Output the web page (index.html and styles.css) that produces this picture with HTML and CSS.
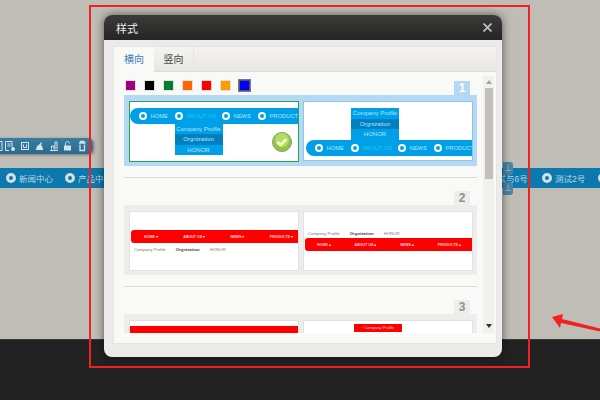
FILE: index.html
```html
<!DOCTYPE html>
<html>
<head>
  <meta charset="utf-8">
  <title>样式</title>
  <link rel="stylesheet" href="styles.css">
</head>
<body>
  <div class="page">
    <div class="top"></div>
    <div class="site-nav">
      <span class="site-item"><i class="dot"></i>新闻中心</span>
      <span class="site-item"><i class="dot"></i>产品中心</span>
      <span class="site-item far"><i class="dot"></i>测试与6号</span>
      <span class="site-item short"><i class="dot"></i>测试2号</span>
      <span class="site-item last"><i class="dot"></i></span>
    </div>
    <div class="middle"></div>
    <div class="footer"></div>
  </div>

  <!-- toolbar of the page behind -->
  <div class="toolbar">
    <svg width="90" height="12" viewBox="0 0 90 12" fill="none" stroke="#d5e3ea">
      <path d="M-3 1.500h5v9h-5"/>
      <path d="M12 7V1.500H5.500v9H9M7.500 4h3M7.500 6h3"/>
      <circle cx="13" cy="9" r="2" fill="#d5e3ea" stroke="none"/>
      <rect x="21.500" y="2.500" width="7" height="7"/>
      <path d="M23.500 4.500v3h3v-3"/>
      <path d="M36 10c0-3 1.500-5 4-6l1-2 1 1-1 2c1 1 2 2.500 2 5z" fill="#d5e3ea" stroke="none"/>
      <path d="M50 10.500h8M51.500 9.500V6h2.500v3.500M55 9.500V2h2v7.500"/>
      <rect x="64" y="5.500" width="7" height="5" fill="#d5e3ea" stroke="none"/>
      <path d="M65.500 5.500V3.500c0-2.500 4-2.500 4 0"/>
      <path d="M79 3h6.500M80.500 3V1.500h3.500V3M80 4.500v6h4.500v-6" stroke-width="1.300"/>
    </svg>
  </div>
  <div class="side-tab first">⊥</div>
  <div class="side-tab second">⊥</div>

  <div class="modal">
    <div class="modal-head">
      <span class="modal-title">样式</span>
      <svg class="modal-close" width="9" height="9" viewBox="0 0 9 9" stroke="#bdbdbd" stroke-width="1.800"><path d="M.5.500l8 8M8.500.500l-8 8"/></svg>
    </div>
    <div class="panel">
      <div class="tabs">
        <span class="tab active">横向</span>
        <span class="tab">竖向</span>
      </div>
      <div class="content">
        <div class="list">
          <div class="swatches">
            <i class="swatch purple"></i>
            <i class="swatch black"></i>
            <i class="swatch green"></i>
            <i class="swatch orange"></i>
            <i class="swatch red"></i>
            <i class="swatch amber"></i>
            <i class="swatch blue selected"></i>
          </div>

          <div class="num num-blue">1</div>
          <div class="group group-blue">
            <div class="card card-picked">
              <div class="menu menu-first">
                <span class="m-item w36"><i class="dot small"></i>HOME</span>
                <span class="m-item w47 lit"><i class="dot small"></i>ABOUT US</span>
                <span class="m-item w36"><i class="dot small"></i>NEWS</span>
                <span class="m-item"><i class="dot small"></i>PRODUCT</span>
              </div>
              <div class="drop drop-left">
                <span>Company Profile</span>
                <span class="dark">Orgnization</span>
                <span>HONOR</span>
              </div>
              <svg class="check" width="20" height="20" viewBox="0 0 20 20">
                <circle cx="10" cy="10" r="9.500" fill="#8fc63f" stroke="#8a9a78"/>
                <circle cx="10" cy="8" r="7" fill="#b4dc62"/>
                <path d="M5.500 10l3 3 6-6" fill="none" stroke="#f4f8d8" stroke-width="2.500"/>
              </svg>
            </div>
            <div class="card card-blue">
              <div class="drop drop-up">
                <span>Company Profile</span>
                <span class="dark">Orgnization</span>
                <span>HONOR</span>
              </div>
              <div class="menu menu-second">
                <span class="m-item w36"><i class="dot small"></i>HOME</span>
                <span class="m-item w47 lit"><i class="dot small"></i>ABOUT US</span>
                <span class="m-item w36"><i class="dot small"></i>NEWS</span>
                <span class="m-item"><i class="dot small"></i>PRODUCT</span>
              </div>
            </div>
          </div>
          <hr class="rule">

          <div class="num">2</div>
          <div class="group">
            <div class="card">
              <div class="red-bar bar-a">
                <span>HOME ▾</span><span>ABOUT US ▾</span><span>NEWS ▾</span><span>PRODUCTS ▾</span>
              </div>
              <div class="sub-links links-a">
                <span>Company Profile</span><b>Orgnization</b><span>HONOR</span>
              </div>
            </div>
            <div class="card">
              <div class="sub-links links-b">
                <span>Company Profile</span><b>Orgnization</b><span>HONOR</span>
              </div>
              <div class="red-bar bar-b">
                <span>HOME ▴</span><span>ABOUT US ▴</span><span>NEWS ▴</span><span>PRODUCTS ▴</span>
              </div>
            </div>
          </div>
          <hr class="rule">

          <div class="num">3</div>
          <div class="group">
            <div class="card">
              <div class="red-strip"></div>
            </div>
            <div class="card">
              <div class="red-drop">› Company Profile</div>
            </div>
          </div>
        </div>

        <div class="scrollbar">
          <div class="arrow-up"></div>
          <div class="thumb"></div>
          <div class="arrow-down"></div>
        </div>
      </div>
    </div>
  </div>

  <!-- red annotation drawn over the screenshot -->
  <div class="mark-box"></div>
  <svg class="mark-arrow" width="50" height="20" viewBox="0 0 50 20">
    <path d="M0 4L11 1l-1 5 40 10v3L9 10l-1 5z" fill="#ee2222"/>
  </svg>
</body>
</html>
```

FILE: styles.css
```css
* {
  box-sizing: border-box;
}

html, body {
  margin: 0;
  width: 600px;
  height: 400px;
  overflow: hidden;
}

body {
  position: relative;
  font-family: "Liberation Sans", "Noto Sans CJK SC", sans-serif;
}

i {
  display: block;
}

/* page behind the dialog */
.page {
  height: 400px;
  display: flex;
  flex-direction: column;
  background: #c0bdb6;
}

.top {
  height: 168px;
}

.site-nav {
  height: 20px;
  display: flex;
  align-items: center;
  padding-left: 6px;
  overflow: hidden;
  background: #0b79ae;
}

.site-item {
  flex: none;
  display: flex;
  align-items: center;
  gap: 3px;
  width: 59px;
  white-space: nowrap;
  font-size: 8.500px;
  color: #bfd6df;
}

.site-item.far {
  margin-left: 352px;
  width: 66px;
}

.site-item.short {
  width: 56px;
}

.site-item.last {
  width: 11px;
}

.dot {
  width: 10px;
  height: 10px;
  flex: none;
  border-radius: 50%;
  border: 3px solid #d7dedf;
  background: #0b79ae;
}

.middle {
  flex: 1;
}

.footer {
  height: 61px;
  background: #222222;
  border-top: 1px solid #3a3a38;
}

.toolbar {
  position: absolute;
  left: -8px;
  top: 138px;
  width: 101px;
  height: 16px;
  padding: 2px 0 0 8px;
  background: linear-gradient(#3a7da2, #2b6a8f);
  border-radius: 5px;
  box-shadow: 1px 1px 3px rgba(0, 0, 0, .4);
}

.toolbar svg {
  display: block;
}

.side-tab {
  position: absolute;
  left: 503px;
  width: 10px;
  height: 13px;
  background: #4a86a5;
  border-radius: 0 3px 3px 0;
  font-size: 8px;
  line-height: 13px;
  text-align: center;
  color: #a9c6d4;
}

.side-tab.first {
  top: 162px;
}

.side-tab.second {
  top: 182px;
}

/* dialog */
.modal {
  position: absolute;
  left: 104px;
  top: 15px;
  width: 398px;
  height: 342px;
  display: flex;
  flex-direction: column;
  background: #ecebe9;
  border-radius: 8px;
  box-shadow: 0 0 10px rgba(0, 0, 0, .55);
}

.modal-head {
  height: 25px;
  flex: none;
  display: flex;
  align-items: center;
  justify-content: space-between;
  padding: 0 10px 0 12px;
  background: linear-gradient(#3b3b39, #252525);
  border-radius: 8px 8px 0 0;
}

.modal-title {
  font-size: 11px;
  color: #eeeeee;
}

.panel {
  margin: 6px 5px 0 9px;
  height: 298px;
  display: flex;
  flex-direction: column;
  border: 1px solid #e6e5e2;
  background: #f9f9f7;
}

.tabs {
  height: 25px;
  flex: none;
  display: flex;
  background: linear-gradient(#f4f3f1, #e8e7e4);
  border-bottom: 1px solid #dddcd8;
}

.tab {
  width: 40px;
  height: 25px;
  border-right: 1px solid #e6e5e2;
  font-size: 10px;
  line-height: 25px;
  text-align: center;
  color: #444444;
}

.tab.active {
  background: #f9f9f7;
  color: #3f7fb5;
  border-right: 0;
}

.content {
  height: 262px;
  display: flex;
  align-items: flex-start;
  gap: 6px;
  padding: 4px 2px 0 10px;
}

.list {
  width: 353px;
  height: 257px;
  overflow: hidden;
}

.swatches {
  display: flex;
  gap: 8px;
  padding: 4px 0 0 1px;
  height: 20px;
}

.swatch {
  width: 11px;
  height: 11px;
  border: 1px solid #e2e0dc;
}

.swatch.selected {
  border-color: #555566;
  box-shadow: 0 0 0 1px #777788;
}

.purple { background: #a0007e; }
.black { background: #000000; }
.green { background: #007f2d; }
.orange { background: #ff6600; }
.red { background: #ff0000; }
.amber { background: #ff9900; }
.blue { background: #0000ff; }

.num {
  width: 16px;
  height: 14px;
  margin-left: 330px;
  background: #ededeb;
  font-size: 12px;
  font-weight: bold;
  line-height: 14px;
  text-align: center;
  color: #8f8f8f;
}

.num-blue {
  background: #b5d9f3;
  color: #ffffff;
  margin-top: -15px;
}

.group {
  height: 70px;
  display: flex;
  gap: 4px;
  padding: 6px 4px 0 5px;
  background: #ededeb;
}

.group-blue {
  height: 71px;
  background: #b5d9f3;
}

.card {
  position: relative;
  width: 170px;
  height: 60px;
  overflow: hidden;
  background: #ffffff;
  border: 1px solid #e3e2df;
}

.card-picked {
  height: 61px;
  border: 1.500px solid #1fa652;
}

.card-blue {
  border: 1px solid #8cc4ea;
}

.rule {
  height: 1px;
  margin: 11px 0 13px;
  border: 0;
  background: #dddcd8;
}

/* little menu previews */
.menu {
  height: 16px;
  display: flex;
  align-items: center;
  padding-left: 8.500px;
  background: #00a0e9;
  border-radius: 8px 0 0 8px;
  white-space: nowrap;
}

.menu-first {
  margin-top: 5.500px;
}

.menu-second {
  margin-left: 2px;
}

.m-item {
  flex: none;
  display: flex;
  align-items: center;
  gap: 4px;
  font-size: 5.800px;
  color: #b5e6fa;
}

.m-item.lit {
  color: #12cdf2;
}

.w36 { width: 36px; }
.w47 { width: 47px; }

.dot.small {
  width: 8px;
  height: 8px;
  border: 2.500px solid #ffffff;
  background: #00a0e9;
}

.drop {
  width: 48px;
  background: #00a0e9;
}

.drop span {
  display: block;
  height: 10.500px;
  font-size: 6px;
  line-height: 10.500px;
  text-align: center;
  color: #b5e6fa;
  white-space: nowrap;
}

.drop .dark {
  background: #0080c0;
}

.drop-left {
  margin-left: 44.500px;
}

.drop-up {
  margin: 6px 0 0 47px;
}

.check {
  position: absolute;
  left: 141.500px;
  top: 30px;
}

.red-bar {
  height: 13px;
  display: flex;
  align-items: center;
  justify-content: space-between;
  background: #ff0000;
  border-radius: 3px 0 0 3px;
  font-size: 3.600px;
  font-weight: bold;
  color: #ffd8d8;
  white-space: nowrap;
}

.bar-a {
  margin: 18px 0 0 1px;
  padding: 0 5px 0 13px;
}

.bar-b {
  margin: 2px 0 0 1px;
  padding: 0 11px 0 12px;
}

.sub-links {
  display: flex;
  gap: 10px;
  padding-left: 4px;
  font-size: 4.300px;
  color: #777777;
  white-space: nowrap;
}

.sub-links b {
  color: #444444;
}

.links-a {
  margin-top: 4px;
}

.links-b {
  margin-top: 19px;
}

.red-strip {
  height: 12px;
  margin-top: 5px;
  background: #ff0000;
}

.red-drop {
  width: 48px;
  height: 8px;
  margin: 3px 0 0 50px;
  padding-left: 8px;
  background: #ff0000;
  font-size: 4px;
  line-height: 8px;
  color: #ffd8d8;
  white-space: nowrap;
}

/* scrollbar */
.scrollbar {
  width: 11px;
  height: 257px;
  display: flex;
  flex-direction: column;
  align-items: center;
  background: #f0f0ee;
}

.arrow-up {
  width: 0;
  height: 0;
  flex: none;
  margin: 4px 0;
  border-left: 3.500px solid transparent;
  border-right: 3.500px solid transparent;
  border-bottom: 4px solid #a5a5a5;
}

.thumb {
  width: 8px;
  height: 91px;
  flex: none;
  background: #c2bfb8;
}

.arrow-down {
  width: 0;
  height: 0;
  margin-top: auto;
  margin-bottom: 5px;
  border-left: 3.500px solid transparent;
  border-right: 3.500px solid transparent;
  border-top: 4px solid #333333;
}

/* annotation */
.mark-box {
  position: absolute;
  left: 89px;
  top: 5px;
  width: 441px;
  height: 363px;
  border: 2px solid #ee2222;
}

.mark-arrow {
  position: absolute;
  left: 552px;
  top: 313px;
}
```
